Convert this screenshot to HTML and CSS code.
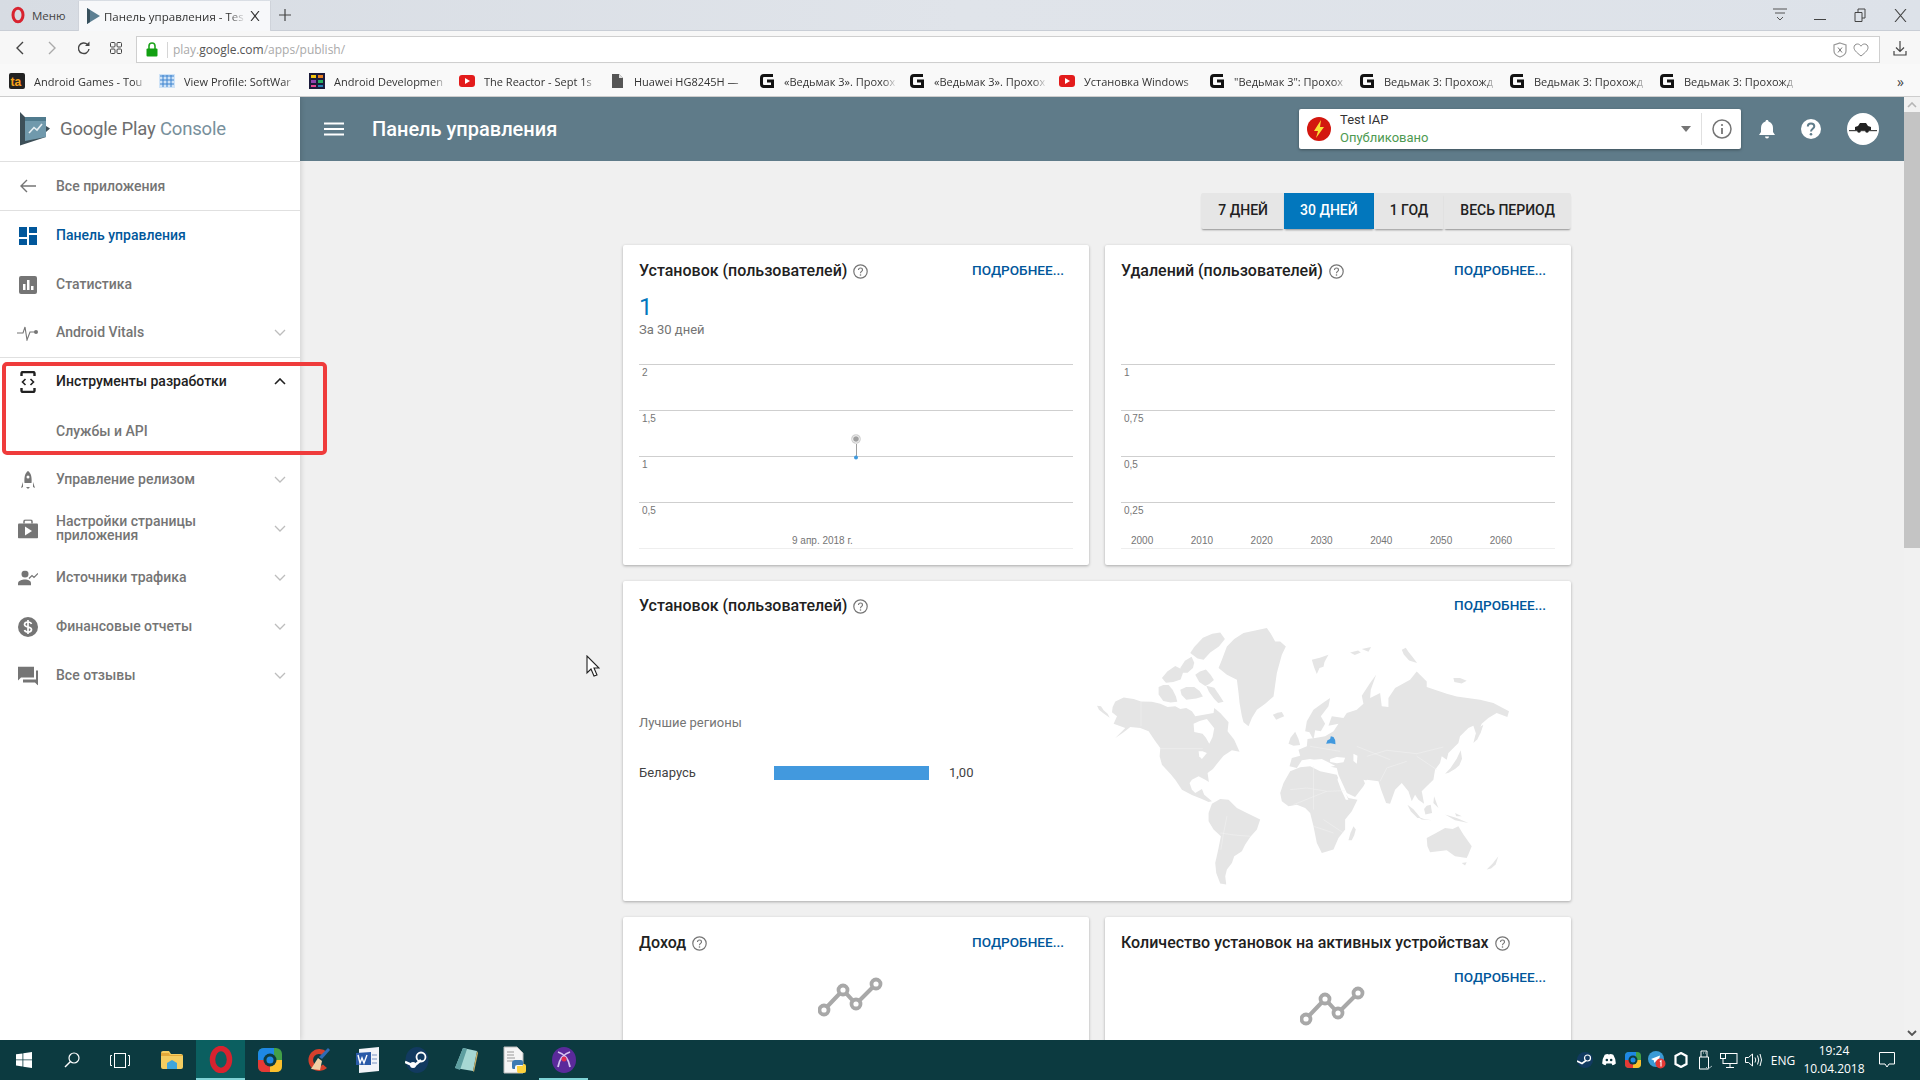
FILE: index.html
```html
<!DOCTYPE html>
<html lang="ru">
<head>
<meta charset="utf-8">
<title>Панель управления - Test IAP</title>
<link rel="stylesheet" href="styles.css">
</head>
<body>
<div class="browser">

  <div class="tabstrip">
    <div class="opera-menu">
      <svg width="16" height="18" viewBox="0 0 16 18"><ellipse cx="8" cy="9" rx="5" ry="6.800" fill="none" stroke="#d8232f" stroke-width="3"/></svg>
      <span>Меню</span>
    </div>
    <div class="tab">
      <svg width="14" height="16" viewBox="0 0 14 16"><path d="M1 0l13 8-13 8z" fill="#5c7f92"/><path d="M1 0l3 2v12l-3 2z" fill="#37505d"/></svg>
      <span class="tab-title">Панель управления - Tes</span>
      <svg class="tab-close" width="10" height="10" viewBox="0 0 10 10"><path d="M1 0l8 10M9 0l-8 10" stroke="#333" stroke-width="1.100"/></svg>
    </div>
    <svg class="newtab" width="12" height="12" viewBox="0 0 12 12"><path d="M6 0v12M0 6h12" stroke="#444" stroke-width="1.200"/></svg>
    <div class="win-controls">
      <div class="win-btn"><svg width="14" height="14" viewBox="0 0 14 14"><path d="M0 1h14M2 5h10M4 9l3 3 3-3" fill="none" stroke="#555"/></svg></div>
      <div class="win-btn"><svg width="12" height="12" viewBox="0 0 12 12"><path d="M0 10.500h12" stroke="#444"/></svg></div>
      <div class="win-btn"><svg width="12" height="14" viewBox="0 0 12 14"><path d="M1 4.500h7v9h-7zM4 4V1h7v9H8" fill="none" stroke="#444"/></svg></div>
      <div class="win-btn"><svg width="13" height="13" viewBox="0 0 13 13"><path d="M1 0l11 13M12 0L1 13" stroke="#444" stroke-width="1.100"/></svg></div>
    </div>
  </div>

  <div class="addressrow">
    <div class="navbtn"><svg width="10" height="14" viewBox="0 0 10 14"><path d="M8 1L2 7l6 6" fill="none" stroke="#444" stroke-width="1.400"/></svg></div>
    <div class="navbtn"><svg width="10" height="14" viewBox="0 0 10 14"><path d="M2 1l6 6-6 6" fill="none" stroke="#aaa" stroke-width="1.400"/></svg></div>
    <div class="navbtn"><svg width="14" height="14" viewBox="0 0 14 14"><path d="M12 8a5.300 5.300 0 1 1-1.500-4.500" fill="none" stroke="#444" stroke-width="1.400"/><path d="M12.500 0.500v4.500h-4.500z" fill="#444"/></svg></div>
    <div class="navbtn"><svg width="14" height="14" viewBox="0 0 14 14"><g fill="none" stroke="#444"><rect x="1.500" y="1.500" width="4.500" height="4.500" rx="1"/><rect x="8" y="1.500" width="4.500" height="4.500" rx="1"/><rect x="1.500" y="8" width="4.500" height="4.500" rx="1"/><rect x="8" y="8" width="4.500" height="4.500" rx="1"/></g></svg></div>
    <div class="urlbar">
      <svg class="lock" width="12" height="15" viewBox="0 0 12 15"><path d="M3 7V4a3 3 0 0 1 6 0v3" fill="none" stroke="#1ea51e" stroke-width="1.600"/><rect x="0.500" y="6.500" width="11" height="8" rx="1" fill="#12a012"/></svg>
      <span class="url-sep"></span>
      <span class="url"><span class="url-dim">play.</span><span class="url-host">google.com</span><span class="url-dim">/apps/publish/</span></span>
      <svg class="url-shield" width="14" height="16" viewBox="0 0 14 16"><path d="M7 1l6 2v6c0 3-3 5-6 6-3-1-6-3-6-6V3z" fill="none" stroke="#999" stroke-width="1.200"/><path d="M5 5.500l4 5M9 5.500l-4 5" stroke="#777"/></svg>
      <svg class="url-heart" width="16" height="14" viewBox="0 0 16 14"><path d="M8 13C3 9 1 7 1 4.500 1 2.500 2.500 1 4.500 1 6 1 7.300 2 8 3.200 8.700 2 10 1 11.500 1 13.500 1 15 2.500 15 4.500 15 7 13 9 8 13z" fill="none" stroke="#888"/></svg>
    </div>
    <div class="navbtn navbtn-right"><svg width="14" height="15" viewBox="0 0 14 15"><path d="M7 0v10M3 6.500l4 4 4-4M1 10v4h12v-4" fill="none" stroke="#444" stroke-width="1.200"/></svg></div>
  </div>

  <div class="bookmarks">
    <a class="bm"><svg width="16" height="16" viewBox="0 0 16 16"><rect width="16" height="16" rx="2" fill="#222"/><text x="1.500" y="13" font-family="Liberation Sans" font-size="12" font-weight="700" fill="#f7a11a">ta</text></svg><span>Android Games - Tou</span></a>
    <a class="bm"><svg width="16" height="16" viewBox="0 0 16 16"><rect y="1" width="16" height="14" fill="#cfe3f7"/><path d="M1 3h14M1 7h14M1 11h14M4 2v12M8 2v12M12 2v12" stroke="#3c83cf"/></svg><span>View Profile: SoftWar</span></a>
    <a class="bm"><svg width="16" height="16" viewBox="0 0 16 16"><rect width="16" height="16" fill="#1b1b3b"/><rect x="2" y="2" width="5" height="3" fill="#f1c40f"/><rect x="9" y="2" width="5" height="3" fill="#e67e22"/><rect x="2" y="7" width="5" height="3" fill="#8e44ad"/><rect x="9" y="7" width="5" height="3" fill="#27ae60"/><rect x="2" y="12" width="5" height="2" fill="#e84393"/><rect x="9" y="12" width="5" height="2" fill="#2980b9"/></svg><span>Android Developmen</span></a>
    <a class="bm"><svg width="16" height="16" viewBox="0 0 16 16"><rect y="2" width="16" height="12" rx="3" fill="#e31b1b"/><path d="M6 5l5 3-5 3z" fill="#fff"/></svg><span>The Reactor - Sept 1s</span></a>
    <a class="bm"><svg width="16" height="16" viewBox="0 0 16 16"><path d="M3 1h7l4 4v10H3z" fill="#555"/><path d="M10 1v4h4z" fill="#ddd"/></svg><span>Huawei HG8245H —</span></a>
    <a class="bm"><svg width="16" height="16" viewBox="0 0 16 16"><path d="M14 2.500H5Q2.500 2.500 2.500 5v6Q2.500 13.500 5 13.500h8.500V8H8" fill="none" stroke="#111" stroke-width="3"/></svg><span>«Ведьмак 3». Прохох</span></a>
    <a class="bm"><svg width="16" height="16" viewBox="0 0 16 16"><path d="M14 2.500H5Q2.500 2.500 2.500 5v6Q2.500 13.500 5 13.500h8.500V8H8" fill="none" stroke="#111" stroke-width="3"/></svg><span>«Ведьмак 3». Прохох</span></a>
    <a class="bm"><svg width="16" height="16" viewBox="0 0 16 16"><rect y="2" width="16" height="12" rx="3" fill="#e31b1b"/><path d="M6 5l5 3-5 3z" fill="#fff"/></svg><span>Установка Windows</span></a>
    <a class="bm"><svg width="16" height="16" viewBox="0 0 16 16"><path d="M14 2.500H5Q2.500 2.500 2.500 5v6Q2.500 13.500 5 13.500h8.500V8H8" fill="none" stroke="#111" stroke-width="3"/></svg><span>"Ведьмак 3": Прохох</span></a>
    <a class="bm"><svg width="16" height="16" viewBox="0 0 16 16"><path d="M14 2.500H5Q2.500 2.500 2.500 5v6Q2.500 13.500 5 13.500h8.500V8H8" fill="none" stroke="#111" stroke-width="3"/></svg><span>Ведьмак 3: Прохожд</span></a>
    <a class="bm"><svg width="16" height="16" viewBox="0 0 16 16"><path d="M14 2.500H5Q2.500 2.500 2.500 5v6Q2.500 13.500 5 13.500h8.500V8H8" fill="none" stroke="#111" stroke-width="3"/></svg><span>Ведьмак 3: Прохожд</span></a>
    <a class="bm"><svg width="16" height="16" viewBox="0 0 16 16"><path d="M14 2.500H5Q2.500 2.500 2.500 5v6Q2.500 13.500 5 13.500h8.500V8H8" fill="none" stroke="#111" stroke-width="3"/></svg><span>Ведьмак 3: Прохожд</span></a>
    <span class="bm-more">»</span>
  </div>

  <div class="page">
    <aside class="sidebar">
      <div class="logo">
        <svg width="32" height="34" viewBox="0 0 32 34"><path d="M1 0L6 5H27V14L31 16.500 27 20V25L1 33.500Z" fill="#3d4f58"/><path d="M6 5H27V25L6 29Z" fill="#7099ac"/><path d="M6 5H27V9H6Z" fill="#507b8e"/><path d="M10 21l5-5.500 3 2.500 5-6" fill="none" stroke="#e6eef2" stroke-width="1.600"/></svg>
        <span class="logo-text">Google Play <span class="logo-accent">Console</span></span>
      </div>
      <div class="nav-item nav-back">
        <svg class="nav-icon" width="18" height="14" viewBox="0 0 18 14"><path d="M17 7H2M8 1L2 7l6 6" fill="none" stroke="#757575" stroke-width="1.400"/></svg>
        <span class="nav-label">Все приложения</span>
      </div>
      <div class="nav-item nav-active">
        <svg class="nav-icon" width="18" height="18" viewBox="0 0 18 18"><path d="M0 0h8v10H0zM10 0h8v6h-8zM0 12h8v6H0zM10 8h8v10h-8z" fill="#01579b"/></svg>
        <span class="nav-label">Панель управления</span>
      </div>
      <div class="nav-item">
        <svg class="nav-icon" width="18" height="18" viewBox="0 0 18 18"><rect width="18" height="18" rx="2" fill="#757575"/><path d="M4 8h2.500v6H4zM8 4h2.500v10H8zM12 10h2.500v4H12z" fill="#fff"/></svg>
        <span class="nav-label">Статистика</span>
      </div>
      <div class="nav-item nav-last">
        <svg class="nav-icon" width="22" height="16" viewBox="0 0 22 16"><path d="M0 8h6l2-6 2 13 3-8h6" fill="none" stroke="#757575" stroke-width="1.100"/><circle cx="19" cy="7" r="2" fill="#757575"/></svg>
        <span class="nav-label">Android Vitals</span>
        <svg class="chev" width="12" height="7" viewBox="0 0 12 7"><path d="M1 1l5 5 5-5" fill="none" stroke="#bdbdbd" stroke-width="1.300"/></svg>
      </div>
      <div class="nav-group">
        <div class="nav-item nav-open">
          <svg class="nav-icon" width="16" height="22" viewBox="0 0 16 22"><path d="M1.500 5V2.500q0-1.500 1.500-1.500h10q1.500 0 1.500 1.500V5M1.500 17v2.500q0 1.500 1.500 1.500h10q1.500 0 1.500-1.500V17" fill="none" stroke="#212121" stroke-width="2.400"/><path d="M5.500 8l-3 3 3 3M10.500 8l3 3-3 3" fill="none" stroke="#212121" stroke-width="1.600"/></svg>
          <span class="nav-label">Инструменты разработки</span>
          <svg class="chev" width="12" height="7" viewBox="0 0 12 7"><path d="M1 6l5-5 5 5" fill="none" stroke="#212121" stroke-width="1.600"/></svg>
        </div>
        <div class="nav-item nav-sub"><span class="nav-label">Службы и API</span></div>
        <div class="highlight"></div>
      </div>
      <div class="nav-item">
        <svg class="nav-icon" width="14" height="18" viewBox="0 0 14 18"><path d="M7 0c3 2 4 6 3.500 12h-7C3 6 4 2 7 0z" fill="#757575"/><path d="M0 17l2-6v5zM14 17l-2-6v5zM5 16h4l-2 2z" fill="#757575"/><circle cx="7" cy="6" r="1.500" fill="#fff"/></svg>
        <span class="nav-label">Управление релизом</span>
        <svg class="chev" width="12" height="7" viewBox="0 0 12 7"><path d="M1 1l5 5 5-5" fill="none" stroke="#bdbdbd" stroke-width="1.300"/></svg>
      </div>
      <div class="nav-item">
        <svg class="nav-icon" width="20" height="19" viewBox="0 0 20 19"><path d="M6 4V2q0-1.500 1.500-1.500h5Q14 .5 14 2v2" fill="none" stroke="#757575" stroke-width="1.500"/><rect y="4" width="20" height="15" rx="1" fill="#757575"/><path d="M7 7l7 4.500L7 16z" fill="#fff"/></svg>
        <span class="nav-label">Настройки страницы<br>приложения</span>
        <svg class="chev" width="12" height="7" viewBox="0 0 12 7"><path d="M1 1l5 5 5-5" fill="none" stroke="#bdbdbd" stroke-width="1.300"/></svg>
      </div>
      <div class="nav-item">
        <svg class="nav-icon" width="20" height="15" viewBox="0 0 20 15"><circle cx="7" cy="3.500" r="3.500" fill="#757575"/><path d="M0 15v-2c0-3 4-4 7-4s6 1 6 4v2z" fill="#757575"/><path d="M11 8l3-3 2 2 4-4" fill="none" stroke="#757575" stroke-width="1.200"/></svg>
        <span class="nav-label">Источники трафика</span>
        <svg class="chev" width="12" height="7" viewBox="0 0 12 7"><path d="M1 1l5 5 5-5" fill="none" stroke="#bdbdbd" stroke-width="1.300"/></svg>
      </div>
      <div class="nav-item">
        <svg class="nav-icon" width="20" height="20" viewBox="0 0 20 20"><circle cx="10" cy="10" r="10" fill="#757575"/><path d="M13.500 7C13 5.500 11.500 5 10 5 8 5 6.500 6 6.500 7.500 6.500 11 13.500 9 13.500 12.500 13.500 14 12 15 10 15 8.500 15 7 14.500 6.500 13M10 3v14" fill="none" stroke="#fff" stroke-width="1.700"/></svg>
        <span class="nav-label">Финансовые отчеты</span>
        <svg class="chev" width="12" height="7" viewBox="0 0 12 7"><path d="M1 1l5 5 5-5" fill="none" stroke="#bdbdbd" stroke-width="1.300"/></svg>
      </div>
      <div class="nav-item">
        <svg class="nav-icon" width="20" height="19" viewBox="0 0 20 19"><path d="M0 0h16v11H3l-3 3z" fill="#757575"/><path d="M18 4h2v15l-3-3H5v-3h13z" fill="#757575"/></svg>
        <span class="nav-label">Все отзывы</span>
        <svg class="chev" width="12" height="7" viewBox="0 0 12 7"><path d="M1 1l5 5 5-5" fill="none" stroke="#bdbdbd" stroke-width="1.300"/></svg>
      </div>
    </aside>

    <div class="appcol">
      <header class="topbar">
        <svg class="hamburger" width="20" height="14" viewBox="0 0 20 14"><path d="M0 1.500h20M0 7h20M0 12.500h20" stroke="#fff" stroke-width="2"/></svg>
        <h1 class="page-title">Панель управления</h1>
        <div class="app-select">
          <svg width="24" height="24" viewBox="0 0 24 24"><circle cx="12" cy="12" r="12" fill="#d3170f"/><path d="M14 3L7 14h4l-2 7 8-11h-4z" fill="#f9e036"/></svg>
          <div class="app-text">
            <span class="app-name">Test IAP</span>
            <span class="app-status">Опубликовано</span>
          </div>
          <span class="app-caret"></span>
          <span class="app-divider"></span>
          <svg class="app-info" width="20" height="20" viewBox="0 0 20 20"><circle cx="10" cy="10" r="9" fill="none" stroke="#757575" stroke-width="1.500"/><path d="M10 9v6" stroke="#757575" stroke-width="1.800"/><circle cx="10" cy="6" r="1.100" fill="#757575"/></svg>
        </div>
        <svg class="top-icon" width="18" height="20" viewBox="0 0 18 20"><path d="M9 1c1 0 1.500 .7 1.500 1.500C13.500 3.200 15 6 15 9v4l2 3H1l2-3V9c0-3 1.500-5.800 4.500-6.500C7.500 1.700 8 1 9 1z" fill="#fff"/><path d="M7 17.500h4a2 2 0 0 1-4 0z" fill="#fff"/></svg>
        <svg class="top-icon help-top" width="20" height="20" viewBox="0 0 20 20"><circle cx="10" cy="10" r="10" fill="#fff"/><path d="M6.800 7.500C6.800 5.500 8.300 4.500 10 4.500s3.300 1 3.300 2.800c0 2.400-3.300 2.600-3.300 5.200" fill="none" stroke="#607d8b" stroke-width="2"/><circle cx="10" cy="15.300" r="1.300" fill="#607d8b"/></svg>
        <svg class="avatar" width="32" height="32" viewBox="0 0 32 32"><circle cx="16" cy="16" r="16" fill="#fff"/><path d="M11 13l2-3h6l2 3 3 1v3H8v-3z" fill="#222"/><rect x="2" y="17" width="28" height="1.200" fill="#444"/><circle cx="12" cy="18" r="1.800" fill="#222"/><circle cx="20" cy="18" r="1.800" fill="#222"/></svg>
      </header>

      <main class="main">
        <div class="range">
          <span class="range-btn">7 дней</span>
          <span class="range-btn range-on">30 дней</span>
          <span class="range-btn">1 год</span>
          <span class="range-btn">Весь период</span>
        </div>
        <div class="cards">

          <section class="card">
            <div class="card-head">
              <h2 class="card-title">Установок (пользователей)
                <svg class="help" width="15" height="15" viewBox="0 0 15 15"><circle cx="7.500" cy="7.500" r="6.700" fill="none" stroke="#757575" stroke-width="1.200"/><path d="M5.500 6c0-1.300 1-2 2-2s2 .7 2 1.900c0 1.500-2 1.600-2 3.300" fill="none" stroke="#757575" stroke-width="1.100"/><circle cx="7.500" cy="11" r=".8" fill="#757575"/></svg>
              </h2>
              <a class="more">Подробнее...</a>
            </div>
            <div class="stat">1</div>
            <div class="stat-sub">За 30 дней</div>
            <div class="chart">
              <div class="row"><span>2</span></div>
              <div class="row"><span>1,5</span></div>
              <div class="row"><span>1</span></div>
              <div class="row row-last"><span>0,5</span><div class="xaxis xaxis-date"><span>9 апр. 2018 г.</span></div></div>
              <svg class="point" width="12" height="26" viewBox="0 0 12 26"><circle cx="6" cy="5" r="4.200" fill="#fff" stroke="#cfcfcf" stroke-width="1.200"/><circle cx="6" cy="5" r="2.800" fill="#a0a0a0"/><path d="M6.500 10v13" stroke="#9e9e9e"/><circle cx="6" cy="23.500" r="2" fill="#3f9ade"/></svg>
            </div>
          </section>

          <section class="card">
            <div class="card-head">
              <h2 class="card-title">Удалений (пользователей)
                <svg class="help" width="15" height="15" viewBox="0 0 15 15"><circle cx="7.500" cy="7.500" r="6.700" fill="none" stroke="#757575" stroke-width="1.200"/><path d="M5.500 6c0-1.300 1-2 2-2s2 .7 2 1.900c0 1.500-2 1.600-2 3.300" fill="none" stroke="#757575" stroke-width="1.100"/><circle cx="7.500" cy="11" r=".8" fill="#757575"/></svg>
              </h2>
              <a class="more">Подробнее...</a>
            </div>
            <div class="chart">
              <div class="row"><span>1</span></div>
              <div class="row"><span>0,75</span></div>
              <div class="row"><span>0,5</span></div>
              <div class="row row-last"><span>0,25</span>
                <div class="xaxis xaxis-years"><span>2000</span><span>2010</span><span>2020</span><span>2030</span><span>2040</span><span>2050</span><span>2060</span></div>
              </div>
            </div>
          </section>

          <section class="card card-wide">
            <div class="card-head">
              <h2 class="card-title">Установок (пользователей)
                <svg class="help" width="15" height="15" viewBox="0 0 15 15"><circle cx="7.500" cy="7.500" r="6.700" fill="none" stroke="#757575" stroke-width="1.200"/><path d="M5.500 6c0-1.300 1-2 2-2s2 .7 2 1.900c0 1.500-2 1.600-2 3.300" fill="none" stroke="#757575" stroke-width="1.100"/><circle cx="7.500" cy="11" r=".8" fill="#757575"/></svg>
              </h2>
              <a class="more">Подробнее...</a>
            </div>
            <div class="geo">
              <div class="regions">
                <div class="regions-title">Лучшие регионы</div>
                <div class="region">
                  <span class="region-name">Беларусь</span>
                  <span class="region-bar"></span>
                  <span class="region-val">1,00</span>
                </div>
              </div>
              <svg class="map" width="412" height="257" viewBox="50 85 1237 771">
                <g fill="#e5e5e5">
                  <path d="M97 322L105 305 130 293 160 298 182 305 215 306 240 312 262 322 285 320 300 328 318 325 335 335 345 350 400 340 402 325 420 340 445 368 442 395 462 420 470 438 478 456 455 452 430 468 412 490 398 508 382 520 386 547 375 540 355 530 335 540 328 550 335 570 345 580 365 568 372 585 395 605 385 607 365 598 335 586 305 570 285 540 268 520 245 495 238 470 240 445 222 420 205 395 180 385 150 382 130 398 105 415 135 385 100 372 110 350 95 338Z"/>
                  <path d="M50 318l12 2 8 12 12 10 6 12-20-14-12-10z"/>
                  <path d="M235 262l14-6 16 0 12 14 10 20 4 16-20 2-22-4-14-20zM245 235l16-20 24-16 16 8 8 10-8 22-22 8-22 2zM300 205l14-22 20-12 8 18-4 16-16 14-18 0zM330 160l12-18 26-28 28-12 24-4 14 20-18 22-26 18-20 22-18-4zM345 225l14-10 18-6 14 16 10 16-14 12-12 6-18-12zM300 270l18-8 24 0 16 12 10 16-20 6-30 4-14-14zM378 258l24 6 14 20 14 22-16 4-12-12-16-22z"/>
                  <path d="M415 205L425 180 440 140 462 118 490 100 525 92 560 85 572 102 585 125 600 125 617 140 605 165 590 220 585 255 580 290 555 312 530 330 515 355 505 380 490 368 485 350 478 310 475 280 470 240 440 225Z"/>
                  <path d="M578 345l14-6 13-2 7 13-14 6-10 4z"/>
                  <path d="M385 640L395 612 420 598 445 600 470 625 500 640 540 660 530 690 510 712 495 735 485 755 462 770 455 790 440 810 435 830 438 855 420 852 408 820 405 790 415 745 422 710 400 690 385 665Z"/>
                  <path d="M600 580L610 550 630 515 660 503 690 500 720 515 770 525 790 575 805 595 832 600 815 635 795 660 795 690 775 715 760 750 725 760 710 730 700 680 690 640 675 625 650 615 625 620 605 605Z"/>
                  <path d="M805 722l6-22 9-20 7 10-5 18-7 14z"/>
                  <path d="M628 500L635 475 660 468 655 450 680 440 682 418 705 415 735 410 760 395 775 372 745 378 755 350 790 355 800 340 830 330 850 312 845 288 870 250 888 225 872 270 870 295 900 280 905 320 925 322 925 295 945 265 990 240 1010 215 1040 245 1040 262 1100 282 1130 290 1200 300 1240 310 1287 335 1282 352 1250 340 1225 355 1205 372 1190 408 1180 378 1165 385 1140 410 1135 430 1120 445 1105 460 1100 480 1085 470 1080 490 1065 510 1060 540 1040 560 1025 575 1032 612 1015 600 1005 585 995 605 985 575 965 550 945 570 930 612 918 610 903 570 895 545 860 540 850 560 825 592 800 580 775 525 770 505 745 500 740 492 722 505 700 480 690 478 665 482 650 505Z"/>
                  <path d="M675 395L680 365 700 330 730 308 750 295 745 320 722 350 735 372 722 395 705 392 700 420 688 398Z"/>
                  <path d="M625 432l6-18 14-18 10 22 5 18-20 2z"/>
                  <path d="M695 180l24-6 26-9-12 22-3 14-12 4-8 18-8-20zM965 150l12-6 8 12 16 20 10 14-24-8-16-18zM810 158l24-6 8 6-18 8zM845 148l28-6-8 14zM1120 235l20 0 20 8-15 8-22-4z"/>
                  <path d="M1180 430l6-24 8-21 16-10-8 24-10 20z"/>
                  <path d="M1095 522l16-16 19-29 12-25 4 25-8 20-12 10-20 12z"/>
                  <path d="M982 615l18 14 22 26-10 0-20-20zM1010 650l22 8 23 4-30-2zM1032 628l8-10 12-3 4 25-20 5zM1062 590l13 35-15-15zM1095 645l35 10 35 15-40-8zM1125 640l20 10-16 0z"/>
                  <path d="M1040 715L1068 700 1095 685 1118 688 1135 680 1150 705 1175 740 1165 765 1160 775 1125 770 1100 752 1050 758 1042 740Z"/>
                  <path d="M1145 790l15-2-5 10zM1220 810l18-18 17-22-8 25-14 12z"/>
                </g>
                <g fill="#fff">
                  <path d="M340 372l18-8 22-6 22 28-5 26-10 20-10-18-10-12-25-5z"/>
                  <path d="M680 482l45-4 40 20-30 8-30-2-25-10z"/>
                  <path d="M750 478l20-6 25 2-5 14-20 3-20-4z"/>
                  <path d="M820 462l12 6-2 24-10-8z"/>
                  <path d="M775 530l14 34 16 36-8 0-14-30-11-30z"/>
                  <path d="M355 455l12 0 13 5-15 18-8-8z"/>
                  <path d="M268 520l18 28 10 18-8-4-12-18z"/>
                  <path d="M850 540l20 5-14 10z"/>
                </g>
                <g fill="none" stroke="#f5f5f5" stroke-width="1.400">
                  <path d="M182 305v75M238 447l130 0M630 570l50-5 60 10 55-2M700 500v130M640 615l100-40M420 700l40 6 50 4M440 650l-10 50-8 50M860 470l60-18 90 10 80-20M900 545l20-40 60-20M830 440l100 40M690 440l90 15M730 660l60 40M700 680l60 20M1010 470l60 40"/>
                </g>
                <path d="M738 432l4-10 8-4 2-8 8 2 5 9 1 13-14-3z" fill="#4299de"/>
              </svg>
            </div>
          </section>

          <section class="card">
            <div class="card-head">
              <h2 class="card-title">Доход
                <svg class="help" width="15" height="15" viewBox="0 0 15 15"><circle cx="7.500" cy="7.500" r="6.700" fill="none" stroke="#757575" stroke-width="1.200"/><path d="M5.500 6c0-1.300 1-2 2-2s2 .7 2 1.900c0 1.500-2 1.600-2 3.300" fill="none" stroke="#757575" stroke-width="1.100"/><circle cx="7.500" cy="11" r=".8" fill="#757575"/></svg>
              </h2>
              <a class="more">Подробнее...</a>
            </div>
            <svg class="empty-graph" width="66" height="40" viewBox="0 0 66 40"><path d="M6 33l19-20 13 14 20-20" fill="none" stroke="#a8a8a8" stroke-width="4"/><g fill="#fff" stroke="#a8a8a8" stroke-width="3.800"><circle cx="6" cy="33" r="4.500"/><circle cx="25" cy="13" r="4.500"/><circle cx="38" cy="27" r="4.500"/><circle cx="58" cy="7" r="4.500"/></g></svg>
          </section>

          <section class="card">
            <div class="card-head">
              <h2 class="card-title">Количество установок на активных устройствах
                <svg class="help" width="15" height="15" viewBox="0 0 15 15"><circle cx="7.500" cy="7.500" r="6.700" fill="none" stroke="#757575" stroke-width="1.200"/><path d="M5.500 6c0-1.300 1-2 2-2s2 .7 2 1.900c0 1.500-2 1.600-2 3.300" fill="none" stroke="#757575" stroke-width="1.100"/><circle cx="7.500" cy="11" r=".8" fill="#757575"/></svg>
              </h2>
              <a class="more">Подробнее...</a>
            </div>
            <svg class="empty-graph empty-graph-low" width="66" height="40" viewBox="0 0 66 40"><path d="M6 33l19-20 13 14 20-20" fill="none" stroke="#a8a8a8" stroke-width="4"/><g fill="#fff" stroke="#a8a8a8" stroke-width="3.800"><circle cx="6" cy="33" r="4.500"/><circle cx="25" cy="13" r="4.500"/><circle cx="38" cy="27" r="4.500"/><circle cx="58" cy="7" r="4.500"/></g></svg>
          </section>

        </div>
      </main>
    </div>

    <div class="scrollbar">
      <div class="sb-arrow"><svg width="10" height="6" viewBox="0 0 10 6"><path d="M1 5l4-4 4 4" fill="none" stroke="#b5b5b5" stroke-width="1.600"/></svg></div>
      <div class="sb-thumb"></div>
      <div class="sb-arrow sb-arrow-down"><svg width="10" height="6" viewBox="0 0 10 6"><path d="M1 1l4 4 4-4" fill="none" stroke="#555" stroke-width="1.800"/></svg></div>
    </div>
  </div>

  <footer class="taskbar">
    <div class="task-btn task-sys"><svg width="16" height="16" viewBox="0 0 16 16"><path d="M0 2.300l6.500-.9V7.500H0zM7.300 1.300L16 0v7.500H7.300zM0 8.300h6.500v6.200L0 13.600zM7.300 8.300H16V16l-8.700-1.200z" fill="#fff"/></svg></div>
    <div class="task-btn task-sys"><svg width="16" height="16" viewBox="0 0 16 16"><circle cx="10" cy="6" r="5" fill="none" stroke="#fff" stroke-width="1.200"/><path d="M6.500 9.500L1 15" stroke="#fff" stroke-width="1.400"/></svg></div>
    <div class="task-btn task-sys"><svg width="20" height="15" viewBox="0 0 20 15"><rect x="4.500" y="0.500" width="11" height="14" fill="none" stroke="#fff"/><path d="M2 2.500H0.500v10H2M18 2.500h1.500v10H18" fill="none" stroke="#fff"/></svg></div>
    <div class="task-gap"></div>
    <div class="task-app"><svg width="22" height="18" viewBox="0 0 22 18"><path d="M0 2q0-2 2-2h6l2 3h10q2 0 2 2v11q0 2-2 2H2q-2 0-2-2z" fill="#f4cd61"/><path d="M0 5h22v-1H9L8 2H0z" fill="#e2a93a"/><path d="M6 18v-6l5-3 5 3v6z" fill="#3fa5dd"/></svg></div>
    <div class="task-app task-active"><svg width="24" height="27" viewBox="0 0 24 27"><ellipse cx="12" cy="13.500" rx="8.500" ry="11" fill="none" stroke="#d8232f" stroke-width="5.500"/></svg></div>
    <div class="task-app"><svg width="24" height="24" viewBox="0 0 24 24"><rect width="24" height="24" rx="6" fill="#43a047"/><path d="M0 12V6q0-6 6-6h10v12z" fill="#1e88e5"/><path d="M0 12h12v12H6q-6 0-6-6z" fill="#e53935"/><path d="M12 12h12v6q0 6-6 6h-6z" fill="#fbc02d"/><circle cx="12" cy="12" r="6.500" fill="#0d3b40"/><circle cx="12" cy="12" r="3.500" fill="#1e88e5"/></svg></div>
    <div class="task-app"><svg width="25" height="26" viewBox="0 0 25 26"><path d="M21 5a11 11 0 1 0 0 16l-4-3.500a6 6 0 1 1 0-9z" fill="#d6402c"/><path d="M22 1l2 2-8 9-3-2z" fill="#2f6bb5"/><path d="M5 22l7-11 4 3-2 9z" fill="#f0d0a6"/></svg></div>
    <div class="task-app"><svg width="24" height="26" viewBox="0 0 24 26"><path d="M3 2l20-2v24l-20 2z" fill="#f2f4f8"/><path d="M0 6l15-1v13H0z" fill="#2a5aa8"/><path d="M2 8l2 8 2-5 2 5 3-8" fill="none" stroke="#fff" stroke-width="1.400"/><path d="M16 8h5M16 12h5M16 16h5" stroke="#7a94c4"/></svg></div>
    <div class="task-app"><svg width="24" height="26" viewBox="0 0 24 26"><ellipse cx="12" cy="13" rx="11.500" ry="13" fill="#123a60"/><path d="M0 15l9 4 7-6" fill="none" stroke="#fff" stroke-width="2.500"/><circle cx="16" cy="10" r="4.500" fill="none" stroke="#fff" stroke-width="1.800"/><circle cx="8" cy="18" r="3" fill="#fff"/></svg></div>
    <div class="task-app"><svg width="24" height="26" viewBox="0 0 24 26"><path d="M9 1l14 3-4 20L1 21z" fill="#a7d8d4"/><path d="M9 1l4 1-7 21-5-2z" fill="#5d9ea0"/><path d="M23 4l1 2-4 19-1-1z" fill="#c8b16a"/></svg></div>
    <div class="task-app"><svg width="24" height="28" viewBox="0 0 24 28"><path d="M1 1h13l6 6v20H1z" fill="#f5f5f5" stroke="#bbb"/><path d="M4 6h7M4 9h7M4 12h8M4 15h6" stroke="#999"/><path d="M12 14h6q2 0 2 2v3h-6q-2 0-2 2v2h-2q-1 0-1-2v-4q0-3 3-3z" fill="#3d7ab3"/><path d="M15 27h6q2 0 2-2v-5q0-2-2-2h-1v2h-6v4q0 3 1 3z" fill="#fdd23e"/></svg></div>
    <div class="task-app task-running"><svg width="24" height="26" viewBox="0 0 24 26"><ellipse cx="12" cy="13" rx="12" ry="13" fill="#5b2a9b"/><path d="M6 5q10 3 12 15M18 5Q8 8 6 20" fill="none" stroke="#d7c5f2" stroke-width="1.800"/><circle cx="12" cy="12" r="2.500" fill="#e02b50"/></svg></div>

    <div class="tray">
      <div class="tray-cell"><svg width="16" height="16" viewBox="0 0 16 16"><circle cx="8" cy="8" r="8" fill="#123a60"/><circle cx="10.500" cy="6" r="3" fill="none" stroke="#fff" stroke-width="1.200"/><path d="M0 9l5 2.500 4-3" stroke="#fff" stroke-width="1.600" fill="none"/></svg></div>
      <div class="tray-cell"><svg width="16" height="12" viewBox="0 0 16 14"><path d="M3 1q3-1.500 5-.5 2-1 5 .5 3 5 3 10-2 2-4 2l-1-2H5l-1 2q-2 0-4-2 0-5 3-10z" fill="#fff"/><circle cx="5.500" cy="7" r="1.500" fill="#0c3a40"/><circle cx="10.500" cy="7" r="1.500" fill="#0c3a40"/></svg></div>
      <div class="tray-cell"><svg width="16" height="16" viewBox="0 0 16 16"><rect width="16" height="16" rx="4" fill="#43a047"/><path d="M0 8V4q0-4 4-4h7v8z" fill="#1e88e5"/><path d="M0 8h8v8H4q-4 0-4-4z" fill="#e53935"/><path d="M8 8h8v4q0 4-4 4H8z" fill="#fbc02d"/><circle cx="8" cy="8" r="4.500" fill="#0d3b40"/><circle cx="8" cy="8" r="2.500" fill="#1e88e5"/></svg></div>
      <div class="tray-cell"><svg width="18" height="18" viewBox="0 0 18 18"><circle cx="8" cy="8" r="8" fill="#3a9bd6"/><path d="M3 8l9-3.500-2 8-2.500-2-1.500 1.500V9.500z" fill="#fff"/><circle cx="12.500" cy="12.500" r="5" fill="#e53935"/><path d="M11.800 10.500l1.200-.8v5.800" fill="none" stroke="#fff" stroke-width="1.100"/></svg></div>
      <div class="tray-cell"><svg width="14" height="16" viewBox="0 0 14 16"><path d="M7 1l5.500 3v8L7 15l-5.500-3V4z" fill="none" stroke="#fff" stroke-width="2.200"/></svg></div>
      <div class="tray-cell"><svg width="14" height="20" viewBox="0 0 14 20"><path d="M3 7V1h6v6M1.500 7h9v12h-9z" fill="none" stroke="#fff"/><path d="M5 3h.8M7 3h.8" stroke="#fff"/><path d="M8 17l2 2 4-3" fill="none" stroke="#9fb5b8"/></svg></div>
      <div class="tray-cell"><svg width="18" height="15" viewBox="0 0 18 15"><rect x="3" y="0.500" width="14" height="10" fill="none" stroke="#fff"/><path d="M10 11v3M6 14.500h8" stroke="#fff"/><rect x="0.500" y="0.500" width="5" height="5" fill="#0c3a40" stroke="#fff"/></svg></div>
      <div class="tray-cell"><svg width="17" height="14" viewBox="0 0 17 14"><path d="M0.500 4.500h3l4-3.500v12l-4-3.500h-3z" fill="none" stroke="#fff"/><path d="M10 4.500q1.500 2.500 0 5M12.500 2.500q2.500 4.500 0 9M15 1q3 6 0 12" fill="none" stroke="#fff"/></svg></div>
      <span class="tray-lang">ENG</span>
      <div class="clock"><span>19:24</span><span>10.04.2018</span></div>
      <div class="tray-notify"><svg width="16" height="16" viewBox="0 0 16 16"><path d="M0.500 0.500h15v11.500H10l-2 3-2-3H0.500z" fill="none" stroke="#fff"/></svg></div>
    </div>
  </footer>

  <svg class="cursor" width="14" height="22" viewBox="0 0 14 22"><path d="M1 1v17l4-4 3 7 3-1-3-7h5z" fill="#fff" stroke="#222" stroke-width="1.100"/></svg>
</div>
</body>
</html>
```

FILE: styles.css
```css
* { box-sizing: border-box; }
html, body { margin: 0; height: 100%; overflow: hidden; }
body { font-family: Roboto, "Noto Sans", sans-serif; color: #212121; background: #fff; }
svg { display: block; flex: none; }
h1, h2 { margin: 0; font-weight: inherit; font-size: inherit; }

.browser { position: relative; display: flex; flex-direction: column; height: 1080px; width: 1920px; }

/* Browser chrome */
.tabstrip { display: flex; align-items: stretch; height: 31px; flex: none; background: linear-gradient(90deg, #d7dce3, #e0e4ea 50%, #dde2e9); border-bottom: 1px solid #c9ced6; font-family: "Open Sans", sans-serif; font-size: 11.500px; color: #444; }
.opera-menu { width: 78px; display: flex; align-items: center; padding-left: 10px; gap: 6px; }
.tab { width: 193px; display: flex; align-items: center; padding: 0 10px 0 7px; gap: 4px; background: #f7f8fa; border: 1px solid #cfd3da; border-bottom: 0; border-top: 0; margin-top: 1px; margin-bottom: -1px; }
.tab-title { flex: 1; min-width: 0; white-space: nowrap; color: #333; -webkit-mask-image: linear-gradient(90deg, #000 88%, transparent); mask-image: linear-gradient(90deg, #000 88%, transparent); }
.newtab { align-self: center; margin-left: 8px; }
.win-controls { margin-left: auto; display: flex; }
.win-btn { width: 40px; display: flex; align-items: center; justify-content: center; }

.addressrow { display: flex; align-items: center; height: 33px; flex: none; padding-left: 4px; padding-top: 1px; background: #f7f7f7; }
.navbtn { width: 32px; display: flex; justify-content: center; }
.navbtn-right { width: 40px; }
.urlbar { flex: 1; height: 27px; margin-left: 4px; margin-top: 3px; display: flex; align-items: center; padding-left: 9px; background: #fff; border: 1px solid #cfcfcf; font-family: "Open Sans", sans-serif; font-size: 12px; }
.url-sep { width: 1px; height: 16px; background: #d5d5d5; margin: 0 5px 0 9px; }
.url-dim { color: #a9a9a9; }
.url-host { color: #555; }
.url-shield { margin-left: auto; }
.url-heart { margin: 0 10px 0 6px; }

.bookmarks { display: flex; align-items: center; height: 33px; flex: none; padding: 2px 0 0 9px; background: #f9f9f9; border-bottom: 1px solid #cdcdcd; font-family: "Open Sans", sans-serif; font-size: 11px; color: #333; }
.bm { width: 150px; flex: none; display: flex; align-items: center; gap: 9px; }
.bm span { width: 113px; white-space: nowrap; -webkit-mask-image: linear-gradient(90deg, #000 88%, transparent); mask-image: linear-gradient(90deg, #000 88%, transparent); }
.bm-more { margin-left: auto; padding-right: 16px; font-size: 14px; color: #444; }

/* Page layout */
.page { flex: 1; min-height: 0; display: flex; overflow: hidden; }
.sidebar { width: 300px; flex: none; position: relative; z-index: 2; background: #fff; box-shadow: 1px 0 5px rgba(0,0,0,.14); }
.logo { height: 65px; display: flex; align-items: center; padding-left: 19px; gap: 9px; border-bottom: 1px solid #e0e0e0; }
.logo-text { font-family: Roboto, sans-serif; font-size: 18.500px; color: #6e6e6e; letter-spacing: -0.200px; white-space: nowrap; }
.logo-accent { color: #78909c; }

.nav-item { position: relative; height: 49px; display: flex; align-items: center; padding: 0 0 2px 56px; font-size: 14px; font-weight: 500; color: #757575; line-height: 14px; }
.nav-icon { position: absolute; left: 28px; top: 50%; transform: translate(-50%, -50%); }
.chev { position: absolute; left: 274px; top: 50%; margin-top: -4px; }
.nav-back { border-bottom: 1px solid #e0e0e0; padding-bottom: 0; }
.nav-last { border-bottom: 1px solid #e0e0e0; }
.nav-active { color: #01579b; }
.nav-open { height: 48px; color: #212121; }
.nav-sub { padding-bottom: 0; }
.nav-group { position: relative; }
.highlight { position: absolute; left: 2px; right: -27px; top: 4px; bottom: 0; border: 4px solid #ef3b3b; border-radius: 5px; pointer-events: none; }

.appcol { flex: 1; min-width: 0; display: flex; flex-direction: column; }
.topbar { height: 64px; flex: none; display: flex; align-items: center; padding-left: 24px; background: #5f7b89; }
.page-title { margin-left: 28px; font-size: 20px; font-weight: 500; color: #fff; margin-right: auto; }
.app-select { width: 442px; height: 40px; display: flex; align-items: center; padding-left: 8px; margin-right: 17px; background: #fff; border-radius: 2px; box-shadow: 0 1px 3px rgba(0,0,0,.35); margin-left: 0; }
.app-text { display: flex; flex-direction: column; margin-left: 9px; font-size: 13px; line-height: 18px; flex: 1; }
.app-name { color: #333; }
.app-status { color: #4e9a51; }
.app-caret { width: 0; height: 0; border: 5px solid transparent; border-top: 6px solid #757575; border-bottom: 0; margin-right: 10px; }
.app-divider { width: 1px; height: 32px; background: #e0e0e0; }
.app-info { margin: 0 9px 0 10px; }
.help-top { margin-left: 25px; }
.avatar { margin-left: 26px; margin-right: 25px; }

.main { flex: 1; min-height: 0; overflow: hidden; padding: 32px 333px 0 323px; background: #f0f0f0; }
.range { display: flex; justify-content: flex-end; margin-bottom: 16px; }
.range-btn { height: 36px; padding: 0 16px 2px; display: flex; align-items: center; background: #e6e6e6; font-size: 14px; font-weight: 500; color: #212121; text-transform: uppercase; box-shadow: 0 2px 2px -1px rgba(0,0,0,.4); }
.range-btn:first-child { border-radius: 2px 0 0 2px; padding-left: 17px; }
.range-btn:last-child { border-radius: 0 2px 2px 0; }
.range-on { background: #0277bd; color: #fff; }

.cards { display: grid; grid-template-columns: 466px 466px; gap: 16px; }
.card { height: 320px; display: flex; flex-direction: column; padding: 16px; background: #fff; border-radius: 2px; box-shadow: 0 1px 3px rgba(0,0,0,.3); }
.card-wide { grid-column: span 2; padding-top: 15px; }
.card-head { display: flex; flex-wrap: wrap; justify-content: space-between; row-gap: 15px; padding-right: 9px; }
.card-title { display: flex; align-items: center; gap: 6px; font-size: 16px; font-weight: 500; line-height: 20px; color: #212121; white-space: nowrap; }
.more { margin-left: auto; font-size: 13.600px; font-weight: 500; line-height: 18px; color: #01579b; text-transform: uppercase; }
.stat { margin-top: 10px; font-size: 24px; font-weight: 400; line-height: 32px; color: #0277bd; }
.stat-sub { font-size: 13px; line-height: 14px; color: #757575; }

.chart { position: relative; margin-top: auto; font-family: "Liberation Sans", sans-serif; font-size: 10px; line-height: 16px; color: #757575; border-bottom: 1px solid #eee; }
.row { height: 46px; padding-left: 3px; border-top: 1px solid #cfcfcf; }
.row-last { display: flex; flex-direction: column; justify-content: space-between; }
.xaxis { line-height: 14px; }
.xaxis-date { padding-left: 150px; }
.xaxis-years { display: flex; padding-left: 7px; }
.xaxis-years span { width: 59.800px; flex: none; }
.point { position: absolute; left: 211px; top: 70px; }

.geo { flex: 1; display: flex; margin-top: 12px; }
.regions { flex: 1; padding-top: 87px; font-size: 13px; line-height: 16px; }
.regions-title { color: #757575; }
.region { display: flex; align-items: center; margin-top: 34px; color: #424242; }
.region-name { width: 135px; }
.region-bar { width: 155px; height: 14px; background: #4299de; }
.region-val { margin-left: 20px; }
.map { margin-right: 46px; }

.empty-graph { margin: 24px auto 0 calc(50% - 38px); }
.empty-graph-low { margin-top: 0; }

/* Scrollbar */
.scrollbar { width: 16px; flex: none; display: flex; flex-direction: column; background: #f1f1f1; }
.sb-arrow { height: 15px; display: flex; align-items: center; justify-content: center; }
.sb-arrow-down { margin-top: auto; }
.sb-thumb { height: 436px; background: #c4c4c4; }

/* Taskbar */
.taskbar { height: 40px; flex: none; display: flex; align-items: stretch; background: #0c3a40; color: #fff; }
.task-btn, .task-app { display: flex; align-items: center; justify-content: center; flex: none; }
.task-sys { width: 48px; }
.task-gap { width: 3px; }
.task-app { width: 49px; }
.task-active { background: #0b5f60; border-bottom: 2px solid #7fd3d6; }
.task-running { box-shadow: inset 0 -2px 0 #7fd3d6; }
.tray { margin-left: auto; display: flex; align-items: center; padding-right: 13px; font-family: "Open Sans", sans-serif; font-size: 12px; }
.tray-cell { width: 24px; display: flex; justify-content: center; }
.tray-lang { width: 36px; text-align: center; }
.clock { width: 66px; display: flex; flex-direction: column; align-items: center; line-height: 18px; }
.tray-notify { width: 40px; display: flex; justify-content: center; }

/* Mouse pointer floats over the page */
.cursor { position: absolute; left: 586px; top: 655px; z-index: 5; }
```
